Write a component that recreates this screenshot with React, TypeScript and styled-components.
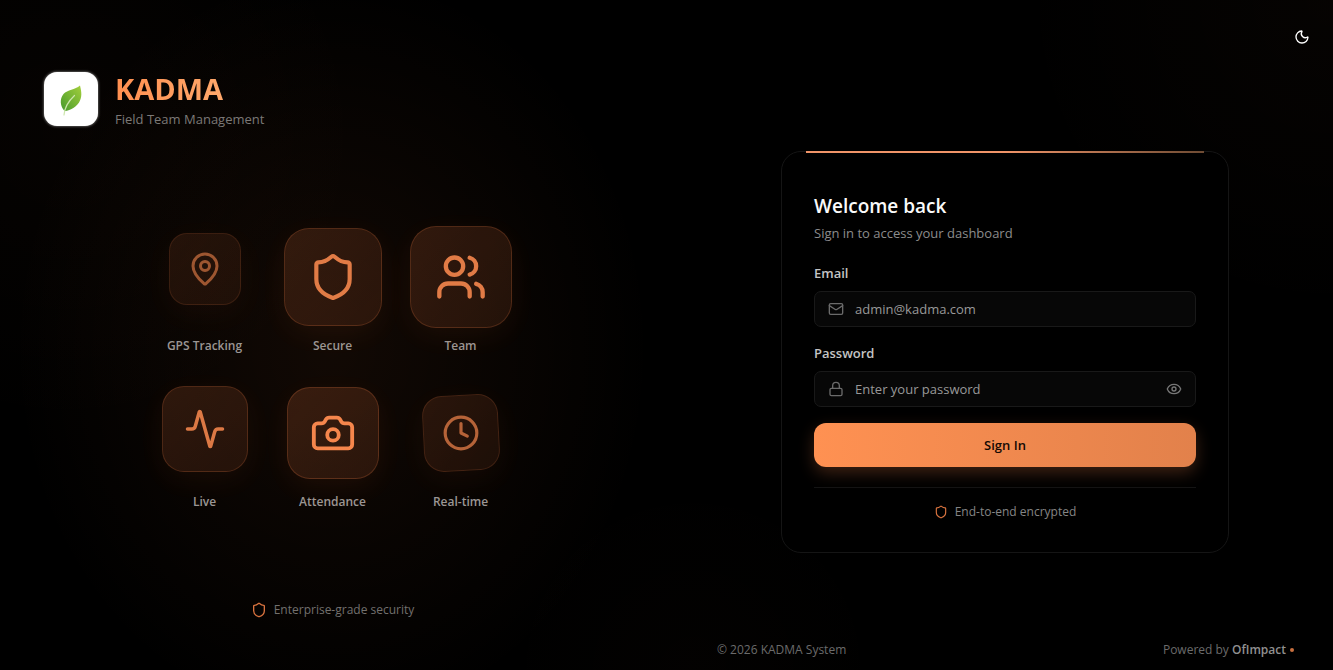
import React from 'react';
import styled, { createGlobalStyle } from 'styled-components';
import { Activity, Camera, Clock, Eye, Lock, Mail, MapPin, Moon, Shield, Users } from 'lucide-react';
import type { LucideIcon } from 'lucide-react';

const GlobalStyle = createGlobalStyle`
  *, *::before, *::after { box-sizing: border-box; }
  body {
    margin: 0;
    background: #000;
    color: #fff;
    font-family: 'Segoe UI', 'Open Sans', 'Noto Sans', sans-serif;
    font-size: 13px;
    line-height: 20px;
  }
  h1, h2, p { margin: 0; }
  button, input { font: inherit; }
`;

const Page = styled.div`
  display: grid;
  grid-template-columns: minmax(0, 677fr) minmax(0, 656fr);
  min-height: 100vh;
  background:
    radial-gradient(circle at 100% 0%, rgba(255, 140, 80, 0.025), transparent 320px),
    radial-gradient(circle at 52% 100%, rgba(255, 140, 80, 0.012), transparent 200px),
    #000;
  @media (max-width: 900px) { grid-template-columns: minmax(0, 1fr); }
`;

const Showcase = styled.section`
  display: flex;
  flex-direction: column;
  padding: 69px 56px 50px 44px;
  background:
    radial-gradient(ellipse 320px 380px at 49% 52%, rgba(255, 130, 60, 0.07), transparent),
    radial-gradient(circle at 10% 20%, rgba(255, 130, 60, 0.025), transparent 300px);
`;

const Brand = styled.header`
  display: flex;
  align-items: center;
  gap: 17px;
`;

const LogoTile = styled.div`
  display: grid;
  place-items: center;
  width: 54px;
  height: 54px;
  border-radius: 13px;
  background: #fff;
  box-shadow: 0 0 3px rgba(255, 255, 255, 0.6);
`;

const BrandName = styled.h1`
  width: max-content;
  font-size: 29px;
  line-height: 40px;
  font-weight: 700;
  color: transparent;
  background: linear-gradient(90deg, #ff8f50, #ffa86b);
  background-clip: text;
`;

const Tagline = styled.p`
  font-size: 13px;
  color: #7c7977;
`;

const Features = styled.ul`
  flex: 1;
  display: grid;
  grid-template-columns: repeat(3, 104px);
  gap: 26px 24px;
  place-content: center;
  margin: 0;
  padding: 6px 0 0;
  list-style: none;
`;

const Feature = styled.li`
  display: flex;
  flex-direction: column;
  align-items: center;
  gap: 8px;
`;

const Stage = styled.div`
  display: grid;
  place-items: center;
  height: 104px;
`;

const Tile = styled.div<{ $size: number; $radius: number; $strength: number; $lift: number; $tilt: number }>`
  display: grid;
  place-items: center;
  width: ${p => p.$size}px;
  height: ${p => p.$size}px;
  border-radius: ${p => p.$radius}px;
  border: 1px solid rgba(255, 130, 75, 0.22);
  background: linear-gradient(135deg, rgba(255, 130, 70, 0.18), rgba(255, 130, 70, 0.13));
  box-shadow: 0 8px 30px rgba(255, 120, 50, 0.08);
  color: #ff8c50;
  opacity: ${p => p.$strength};
  transform: translateY(${p => -p.$lift}px) rotate(${p => p.$tilt}deg);
  svg { transform: rotate(${p => -p.$tilt}deg); }
`;

const FeatureName = styled.span`
  font-size: 12px;
  line-height: 18px;
  font-weight: 600;
  color: #9b9694;
  white-space: nowrap;
`;

const Assurance = styled.p<{ $color: string }>`
  display: flex;
  align-items: center;
  justify-content: center;
  gap: 7px;
  font-size: 12px;
  color: ${p => p.$color};
  svg { color: #d9733f; }
`;

const Access = styled.section`
  display: flex;
  flex-direction: column;
  padding-bottom: 10px;
`;

const TopBar = styled.div`
  display: flex;
  justify-content: flex-end;
  height: 64px;
  padding: 20px 14px 0;
`;

const IconButton = styled.button<{ $color: string; $size: number }>`
  display: grid;
  place-items: center;
  width: ${p => p.$size}px;
  height: ${p => p.$size}px;
  padding: 0;
  border: 0;
  background: none;
  color: ${p => p.$color};
  cursor: pointer;
`;

const Main = styled.main`
  flex: 1;
  display: grid;
  place-items: center;
  padding: 0 24px;
`;

const Card = styled.div`
  position: relative;
  width: 100%;
  max-width: 448px;
  padding: 40px 32px 32px;
  border: 1px solid #151515;
  border-radius: 20px;
  background: #000;
  &::before {
    content: '';
    position: absolute;
    top: 0;
    left: 24px;
    right: 24px;
    height: 2px;
    margin-top: -1px;
    background: linear-gradient(90deg, #f09468 0%, #f09468 50%, #6e4b33 100%);
  }
`;

const Title = styled.h2`
  font-size: 19px;
  line-height: 28px;
  font-weight: 600;
  color: #fafafa;
`;

const Subtitle = styled.p`
  margin-top: 3px;
  color: #8c8c8c;
`;

const Form = styled.form`
  display: flex;
  flex-direction: column;
  gap: 16px;
  margin-top: 20px;
`;

const Field = styled.div`
  display: flex;
  flex-direction: column;
  gap: 8px;
`;

const Label = styled.label`
  font-weight: 600;
  color: #c4c4c4;
`;

const InputShell = styled.div`
  display: flex;
  align-items: center;
  gap: 11px;
  height: 36px;
  padding: 0 9px 0 13px;
  border: 1px solid #191919;
  border-radius: 7px;
  background: #070707;
  color: #6b6b6b;
  &:focus-within { border-color: #ff8c50; }
`;

const Input = styled.input`
  flex: 1;
  min-width: 0;
  padding: 0;
  border: 0;
  outline: 0;
  background: none;
  color: #eee;
  font-size: 13px;
  &::placeholder { color: #999; opacity: 1; }
`;

const Submit = styled.button`
  height: 44px;
  border: 0;
  border-radius: 12px;
  background: linear-gradient(90deg, #ff9152, #e2814b);
  box-shadow: 0 6px 16px rgba(255, 140, 80, 0.24);
  color: #150a04;
  font-weight: 600;
  cursor: pointer;
`;

const CardFooter = styled.div`
  margin-top: 20px;
  padding-top: 16px;
  border-top: 1px solid #141414;
  ${Assurance} { line-height: 16px; }
`;

const Footer = styled.footer`
  display: flex;
  justify-content: space-between;
  padding: 0 39px 0 40px;
  font-size: 12px;
  color: #6b6b6b;
`;

const Credit = styled.span`
  display: flex;
  align-items: center;
  gap: 4px;
  strong { font-weight: 600; color: #909090; }
`;

const Dot = styled.span`
  width: 4px;
  height: 4px;
  border-radius: 50%;
  background: #c9703f;
`;

type FeatureSpec = {
  name: string;
  icon: LucideIcon;
  iconSize: number;
  size: number;
  radius: number;
  strength: number;
  lift?: number;
  tilt?: number;
};

const features: FeatureSpec[] = [
  { name: 'GPS Tracking', icon: MapPin, iconSize: 36, size: 72, radius: 18, strength: 0.6, lift: 8 },
  { name: 'Secure', icon: Shield, iconSize: 50, size: 98, radius: 25, strength: 0.88 },
  { name: 'Team', icon: Users, iconSize: 52, size: 102, radius: 26, strength: 0.88 },
  { name: 'Live', icon: Activity, iconSize: 42, size: 86, radius: 22, strength: 0.86, lift: 4 },
  { name: 'Attendance', icon: Camera, iconSize: 46, size: 92, radius: 23, strength: 0.96 },
  { name: 'Real-time', icon: Clock, iconSize: 38, size: 76, radius: 20, strength: 0.7, tilt: -3 },
];

const Leaf = () => (
  <svg width="28" height="34" viewBox="0 0 28 34" aria-hidden="true">
    <defs>
      <linearGradient id="leaf" x1="0" y1="1" x2="1" y2="0">
        <stop offset="0" stopColor="#469a2c" />
        <stop offset="1" stopColor="#a3cf3c" />
      </linearGradient>
    </defs>
    <path d="M23 3.500C24 8 25.500 13 23 18.500C20.500 24.500 14 28.500 7.500 29C3 24 2.500 17 6.500 12C10.500 7.500 18 8 23 3.500Z" fill="url(#leaf)" />
    <path d="M7 33C7.500 26.500 11 19.500 17.500 13.500" fill="none" stroke="#cde6ad" strokeWidth="1.200" strokeLinecap="round" />
  </svg>
);

export default function App() {
  return (
    <>
      <GlobalStyle />
      <Page>
        <Showcase>
          <Brand>
            <LogoTile><Leaf /></LogoTile>
            <div>
              <BrandName>KADMA</BrandName>
              <Tagline>Field Team Management</Tagline>
            </div>
          </Brand>
          <Features>
            {features.map(({ name, icon: Icon, iconSize, size, radius, strength, lift = 0, tilt = 0 }) => (
              <Feature key={name}>
                <Stage>
                  <Tile $size={size} $radius={radius} $strength={strength} $lift={lift} $tilt={tilt}>
                    <Icon size={iconSize} />
                  </Tile>
                </Stage>
                <FeatureName>{name}</FeatureName>
              </Feature>
            ))}
          </Features>
          <Assurance $color="#73706e">
            <Shield size={16} />
            Enterprise-grade security
          </Assurance>
        </Showcase>
        <Access>
          <TopBar>
            <IconButton type="button" aria-label="Toggle theme" $color="#fff" $size={34}>
              <Moon size={16} />
            </IconButton>
          </TopBar>
          <Main>
            <Card>
              <Title>Welcome back</Title>
              <Subtitle>Sign in to access your dashboard</Subtitle>
              <Form onSubmit={e => e.preventDefault()}>
                <Field>
                  <Label htmlFor="email">Email</Label>
                  <InputShell>
                    <Mail size={16} />
                    <Input id="email" type="email" placeholder="admin@kadma.com" />
                  </InputShell>
                </Field>
                <Field>
                  <Label htmlFor="password">Password</Label>
                  <InputShell>
                    <Lock size={16} />
                    <Input id="password" type="password" placeholder="Enter your password" />
                    <IconButton type="button" aria-label="Show password" $color="#777" $size={24}>
                      <Eye size={16} />
                    </IconButton>
                  </InputShell>
                </Field>
                <Submit type="submit">Sign In</Submit>
              </Form>
              <CardFooter>
                <Assurance $color="#858585">
                  <Shield size={14} />
                  End-to-end encrypted
                </Assurance>
              </CardFooter>
            </Card>
          </Main>
          <Footer>
            <span>© 2026 KADMA System</span>
            <Credit>
              <span>Powered by <strong>OfImpact</strong></span>
              <Dot />
            </Credit>
          </Footer>
        </Access>
      </Page>
    </>
  );
}
